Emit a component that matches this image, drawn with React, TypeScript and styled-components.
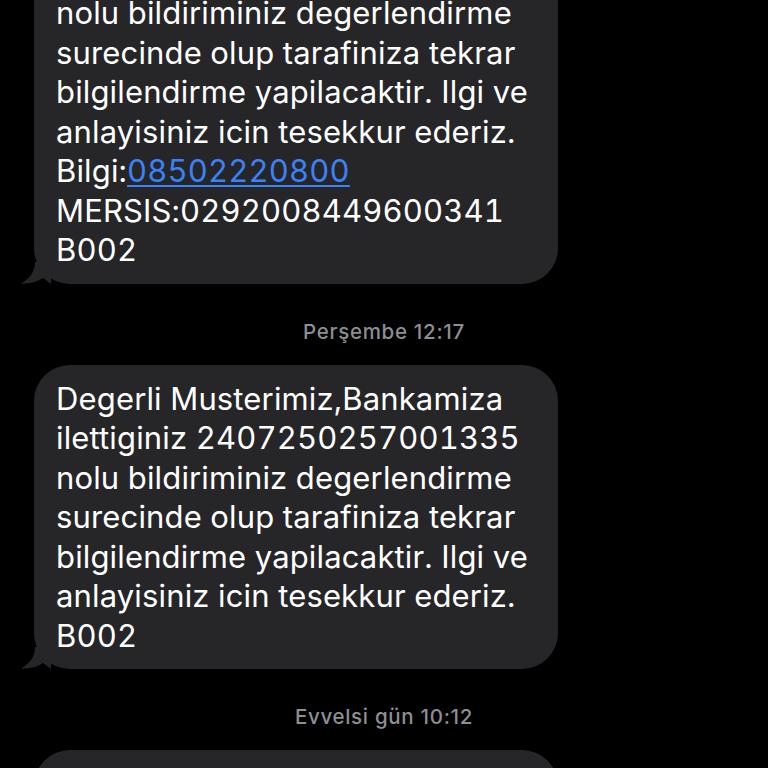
import React from "react";
import styled, { createGlobalStyle } from "styled-components";

const Global = createGlobalStyle`
  html, body {
    margin: 0;
    padding: 0;
    background: #000;
    overflow: hidden;
  }
  body {
    font-family: Inter, "Noto Sans", "DejaVu Sans", sans-serif;
    -webkit-font-smoothing: antialiased;
  }
`;

const Screen = styled.div`
  width: 768px;
  height: 768px;
  overflow: hidden;
  background: #000;
`;

const Thread = styled.div`
  display: flex;
  flex-direction: column;
  align-items: flex-start;
  margin-top: -100px;
  padding-left: 34px;
`;

const Bubble = styled.div`
  position: relative;
  box-sizing: border-box;
  width: 524px;
  padding: 14px 22px;
  border-radius: 36px;
  background: #262628;
  color: #fff;
  font-size: 31px;
  line-height: 39.5px;
  letter-spacing: 0.15px;
  font-feature-settings: "tnum";
  white-space: pre;
`;

const Tail = styled.svg`
  position: absolute;
  left: -13px;
  bottom: 0;
  width: 30px;
  height: 22px;
`;

const Link = styled.a`
  color: #3a82f7;
  text-decoration: underline;
  text-decoration-thickness: 2px;
  text-underline-offset: 3px;
`;

const Stamp = styled.div`
  align-self: stretch;
  margin-left: -34px;
  padding: 36px 0 21px;
  text-align: center;
  color: #8e8e93;
  font-size: 20.5px;
  line-height: 24px;
  font-weight: 500;
  letter-spacing: 0.7px;
`;

const Message: React.FC<{ children: React.ReactNode; tail?: boolean }> = ({
  children,
  tail = true,
}) => (
  <Bubble>
    {tail && (
      <Tail viewBox="0 0 30 22" aria-hidden="true">
        <path
          d="M14 0 C14 8 11 15 0 21.5 C8 22 16 20 22 16 L30 22 L30 0 Z"
          fill="#262628"
        />
      </Tail>
    )}
    {children}
  </Bubble>
);

export default function App() {
  return (
    <Screen>
      <Global />
      <Thread>
        <Message>
          {"Degerli Musterimiz,Bankamiza\nilettiginiz 2407250257001335\nnolu bildiriminiz degerlendirme\nsurecinde olup tarafiniza tekrar\nbilgilendirme yapilacaktir. Ilgi ve\nanlayisiniz icin tesekkur ederiz.\nBilgi:"}
          <Link href="#">08502220800</Link>
          {"\nMERSIS:0292008449600341\nB002"}
        </Message>
        <Stamp>Perşembe 12:17</Stamp>
        <Message>
          {"Degerli Musterimiz,Bankamiza\nilettiginiz 2407250257001335\nnolu bildiriminiz degerlendirme\nsurecinde olup tarafiniza tekrar\nbilgilendirme yapilacaktir. Ilgi ve\nanlayisiniz icin tesekkur ederiz.\nB002"}
        </Message>
        <Stamp>Evvelsi gün 10:12</Stamp>
        <Message>
          {"Degerli Musterimiz,Bankamiza\nilettiginiz 2407250257001335\nnolu bildiriminiz degerlendirme"}
        </Message>
      </Thread>
    </Screen>
  );
}
